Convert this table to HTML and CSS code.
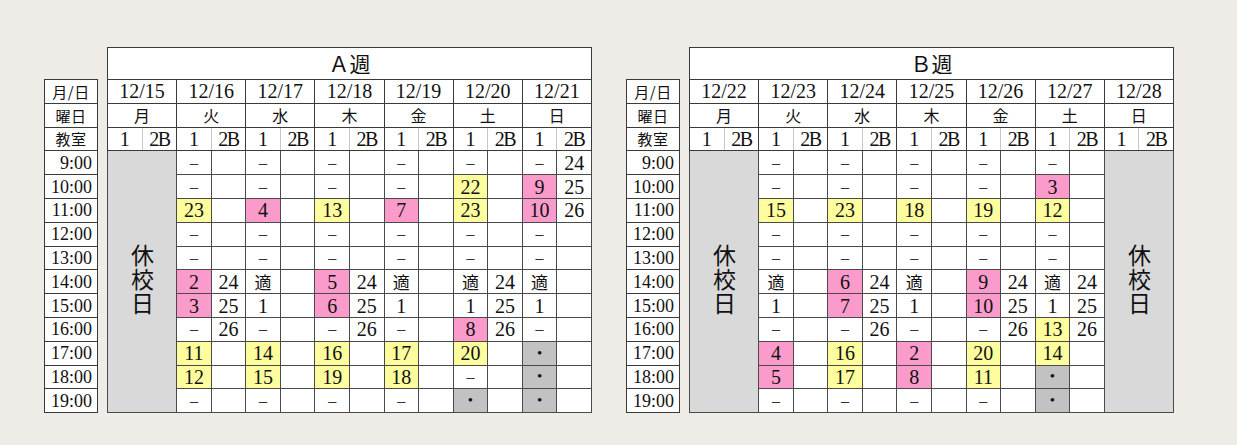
FILE: index.html
```html
<!DOCTYPE html>
<html lang="ja">
<head>
<meta charset="utf-8">
<title>時間割</title>
<link rel="stylesheet" href="styles.css">
</head>
<body>
<div class="page">
  <section class="week">
    <table class="labels">
      <tr><th class="jp">月/日</th></tr>
      <tr><th class="jp">曜日</th></tr>
      <tr><th class="jp">教室</th></tr>
      <tr><th class="t">9:00</th></tr>
      <tr><th class="t">10:00</th></tr>
      <tr><th class="t">11:00</th></tr>
      <tr><th class="t">12:00</th></tr>
      <tr><th class="t">13:00</th></tr>
      <tr><th class="t">14:00</th></tr>
      <tr><th class="t">15:00</th></tr>
      <tr><th class="t">16:00</th></tr>
      <tr><th class="t">17:00</th></tr>
      <tr><th class="t">18:00</th></tr>
      <tr><th class="t">19:00</th></tr>
    </table>
    <table class="grid">
      <tr class="title"><th colspan="14">Ａ週</th></tr>
      <tr class="dates"><th colspan="2">12/15</th><th colspan="2">12/16</th><th colspan="2">12/17</th><th colspan="2">12/18</th><th colspan="2">12/19</th><th colspan="2">12/20</th><th colspan="2">12/21</th></tr>
      <tr class="days"><th colspan="2">月</th><th colspan="2">火</th><th colspan="2">水</th><th colspan="2">木</th><th colspan="2">金</th><th colspan="2">土</th><th colspan="2">日</th></tr>
      <tr class="rooms"><th class="r1">1</th><th class="r2">2B</th><th class="r1">1</th><th class="r2">2B</th><th class="r1">1</th><th class="r2">2B</th><th class="r1">1</th><th class="r2">2B</th><th class="r1">1</th><th class="r2">2B</th><th class="r1">1</th><th class="r2">2B</th><th class="r1">1</th><th class="r2">2B</th></tr>
      <tr><td class="h" colspan="2" rowspan="11"><span class="vt">休校日</span></td><td class="d">–</td><td></td><td class="d">–</td><td></td><td class="d">–</td><td></td><td class="d">–</td><td></td><td class="d">–</td><td></td><td class="d">–</td><td>24</td></tr>
      <tr><td class="d">–</td><td></td><td class="d">–</td><td></td><td class="d">–</td><td></td><td class="d">–</td><td></td><td class="y">22</td><td></td><td class="p">9</td><td>25</td></tr>
      <tr><td class="y">23</td><td></td><td class="p">4</td><td></td><td class="y">13</td><td></td><td class="p">7</td><td></td><td class="y">23</td><td></td><td class="p">10</td><td>26</td></tr>
      <tr><td class="d">–</td><td></td><td class="d">–</td><td></td><td class="d">–</td><td></td><td class="d">–</td><td></td><td class="d">–</td><td></td><td class="d">–</td><td></td></tr>
      <tr><td class="d">–</td><td></td><td class="d">–</td><td></td><td class="d">–</td><td></td><td class="d">–</td><td></td><td class="d">–</td><td></td><td class="d">–</td><td></td></tr>
      <tr><td class="p">2</td><td>24</td><td class="k">適</td><td></td><td class="p">5</td><td>24</td><td class="k">適</td><td></td><td class="k">適</td><td>24</td><td class="k">適</td><td></td></tr>
      <tr><td class="p">3</td><td>25</td><td>1</td><td></td><td class="p">6</td><td>25</td><td>1</td><td></td><td>1</td><td>25</td><td>1</td><td></td></tr>
      <tr><td class="d">–</td><td>26</td><td class="d">–</td><td></td><td class="d">–</td><td>26</td><td class="d">–</td><td></td><td class="p">8</td><td>26</td><td class="d">–</td><td></td></tr>
      <tr><td class="y">11</td><td></td><td class="y">14</td><td></td><td class="y">16</td><td></td><td class="y">17</td><td></td><td class="y">20</td><td></td><td class="g">•</td><td></td></tr>
      <tr><td class="y">12</td><td></td><td class="y">15</td><td></td><td class="y">19</td><td></td><td class="y">18</td><td></td><td class="d">–</td><td></td><td class="g">•</td><td></td></tr>
      <tr><td class="d">–</td><td></td><td class="d">–</td><td></td><td class="d">–</td><td></td><td class="d">–</td><td></td><td class="g">•</td><td></td><td class="g">•</td><td></td></tr>
    </table>
  </section>

  <section class="week">
    <table class="labels">
      <tr><th class="jp">月/日</th></tr>
      <tr><th class="jp">曜日</th></tr>
      <tr><th class="jp">教室</th></tr>
      <tr><th class="t">9:00</th></tr>
      <tr><th class="t">10:00</th></tr>
      <tr><th class="t">11:00</th></tr>
      <tr><th class="t">12:00</th></tr>
      <tr><th class="t">13:00</th></tr>
      <tr><th class="t">14:00</th></tr>
      <tr><th class="t">15:00</th></tr>
      <tr><th class="t">16:00</th></tr>
      <tr><th class="t">17:00</th></tr>
      <tr><th class="t">18:00</th></tr>
      <tr><th class="t">19:00</th></tr>
    </table>
    <table class="grid">
      <tr class="title"><th colspan="14">Ｂ週</th></tr>
      <tr class="dates"><th colspan="2">12/22</th><th colspan="2">12/23</th><th colspan="2">12/24</th><th colspan="2">12/25</th><th colspan="2">12/26</th><th colspan="2">12/27</th><th colspan="2">12/28</th></tr>
      <tr class="days"><th colspan="2">月</th><th colspan="2">火</th><th colspan="2">水</th><th colspan="2">木</th><th colspan="2">金</th><th colspan="2">土</th><th colspan="2">日</th></tr>
      <tr class="rooms"><th class="r1">1</th><th class="r2">2B</th><th class="r1">1</th><th class="r2">2B</th><th class="r1">1</th><th class="r2">2B</th><th class="r1">1</th><th class="r2">2B</th><th class="r1">1</th><th class="r2">2B</th><th class="r1">1</th><th class="r2">2B</th><th class="r1">1</th><th class="r2">2B</th></tr>
      <tr><td class="h" colspan="2" rowspan="11"><span class="vt">休校日</span></td><td class="d">–</td><td></td><td class="d">–</td><td></td><td class="d">–</td><td></td><td class="d">–</td><td></td><td class="d">–</td><td></td><td class="h" colspan="2" rowspan="11"><span class="vt">休校日</span></td></tr>
      <tr><td class="d">–</td><td></td><td class="d">–</td><td></td><td class="d">–</td><td></td><td class="d">–</td><td></td><td class="p">3</td><td></td></tr>
      <tr><td class="y">15</td><td></td><td class="y">23</td><td></td><td class="y">18</td><td></td><td class="y">19</td><td></td><td class="y">12</td><td></td></tr>
      <tr><td class="d">–</td><td></td><td class="d">–</td><td></td><td class="d">–</td><td></td><td class="d">–</td><td></td><td class="d">–</td><td></td></tr>
      <tr><td class="d">–</td><td></td><td class="d">–</td><td></td><td class="d">–</td><td></td><td class="d">–</td><td></td><td class="d">–</td><td></td></tr>
      <tr><td class="k">適</td><td></td><td class="p">6</td><td>24</td><td class="k">適</td><td></td><td class="p">9</td><td>24</td><td class="k">適</td><td>24</td></tr>
      <tr><td>1</td><td></td><td class="p">7</td><td>25</td><td>1</td><td></td><td class="p">10</td><td>25</td><td>1</td><td>25</td></tr>
      <tr><td class="d">–</td><td></td><td class="d">–</td><td>26</td><td class="d">–</td><td></td><td class="d">–</td><td>26</td><td class="y">13</td><td>26</td></tr>
      <tr><td class="p">4</td><td></td><td class="y">16</td><td></td><td class="p">2</td><td></td><td class="y">20</td><td></td><td class="y">14</td><td></td></tr>
      <tr><td class="p">5</td><td></td><td class="y">17</td><td></td><td class="p">8</td><td></td><td class="y">11</td><td></td><td class="g">•</td><td></td></tr>
      <tr><td class="d">–</td><td></td><td class="d">–</td><td></td><td class="d">–</td><td></td><td class="d">–</td><td></td><td class="g">•</td><td></td></tr>
    </table>
  </section>
</div>
</body>
</html>
```

FILE: styles.css
```css
html, body {
  margin: 0;
  padding: 0;
  background: #efece8;
}

body {
  font-family: "Liberation Serif", "Noto Sans CJK JP", serif;
  color: #111;
}

.page {
  display: flex;
  gap: 34px;
  padding: 47px 0 0 44px;
}

.week {
  display: flex;
  align-items: flex-start;
  gap: 9px;
}

table {
  border-collapse: collapse;
  table-layout: fixed;
  background: #fff;
}

th, td {
  padding: 0;
  font-weight: normal;
  text-align: center;
  vertical-align: middle;
  border: 1px solid #3a3a3a;
  line-height: 1;
  overflow: hidden;
  white-space: nowrap;
}

.labels {
  width: 54px;
  margin-top: 32px;
  border: 1.5px solid #222;
}

.labels tr {
  height: 23.8px;
}

.labels .jp {
  font-family: "Noto Sans CJK JP", sans-serif;
  font-size: 15px;
  letter-spacing: 0.5px;
}

.labels .t {
  font-size: 18px;
  text-align: right;
  padding-right: 5px;
}

.grid {
  width: 485px;
  border: 1.5px solid #222;
}

.grid tr {
  height: 23.8px;
}

.grid .title {
  height: 32px;
}

.grid .title th {
  font-family: "Noto Sans CJK JP", sans-serif;
  font-size: 21px;
  font-weight: 400;
  padding-bottom: 1px;
}

.grid td {
  font-size: 20px;
  border-color: #4a4a4a;
}

.dates th {
  font-size: 20px;
}

.days th {
  font-family: "Noto Sans CJK JP", sans-serif;
  font-size: 16px;
}

.rooms th {
  font-size: 20px;
}

.rooms .r1 {
  border-right-color: #c8c8c8;
}

.rooms .r2 {
  letter-spacing: -1.5px;
  border-left-color: #c8c8c8;
}

.grid td.d {
  font-size: 16px;
  color: #333;
}

.grid td.k {
  font-family: "Noto Sans CJK JP", sans-serif;
  font-size: 17px;
}

.grid td.y {
  background: #fdfd9e;
}

.grid td.p {
  background: #fb9bcb;
}

.grid td.g {
  background: #c2c2c2;
  font-size: 15px;
}

.grid td.h {
  background: #d9d9d9;
}

.vt {
  display: inline-block;
  writing-mode: vertical-rl;
  text-orientation: upright;
  font-family: "Noto Sans CJK JP", sans-serif;
  font-size: 23px;
  letter-spacing: 1px;
  line-height: 1;
}
```
